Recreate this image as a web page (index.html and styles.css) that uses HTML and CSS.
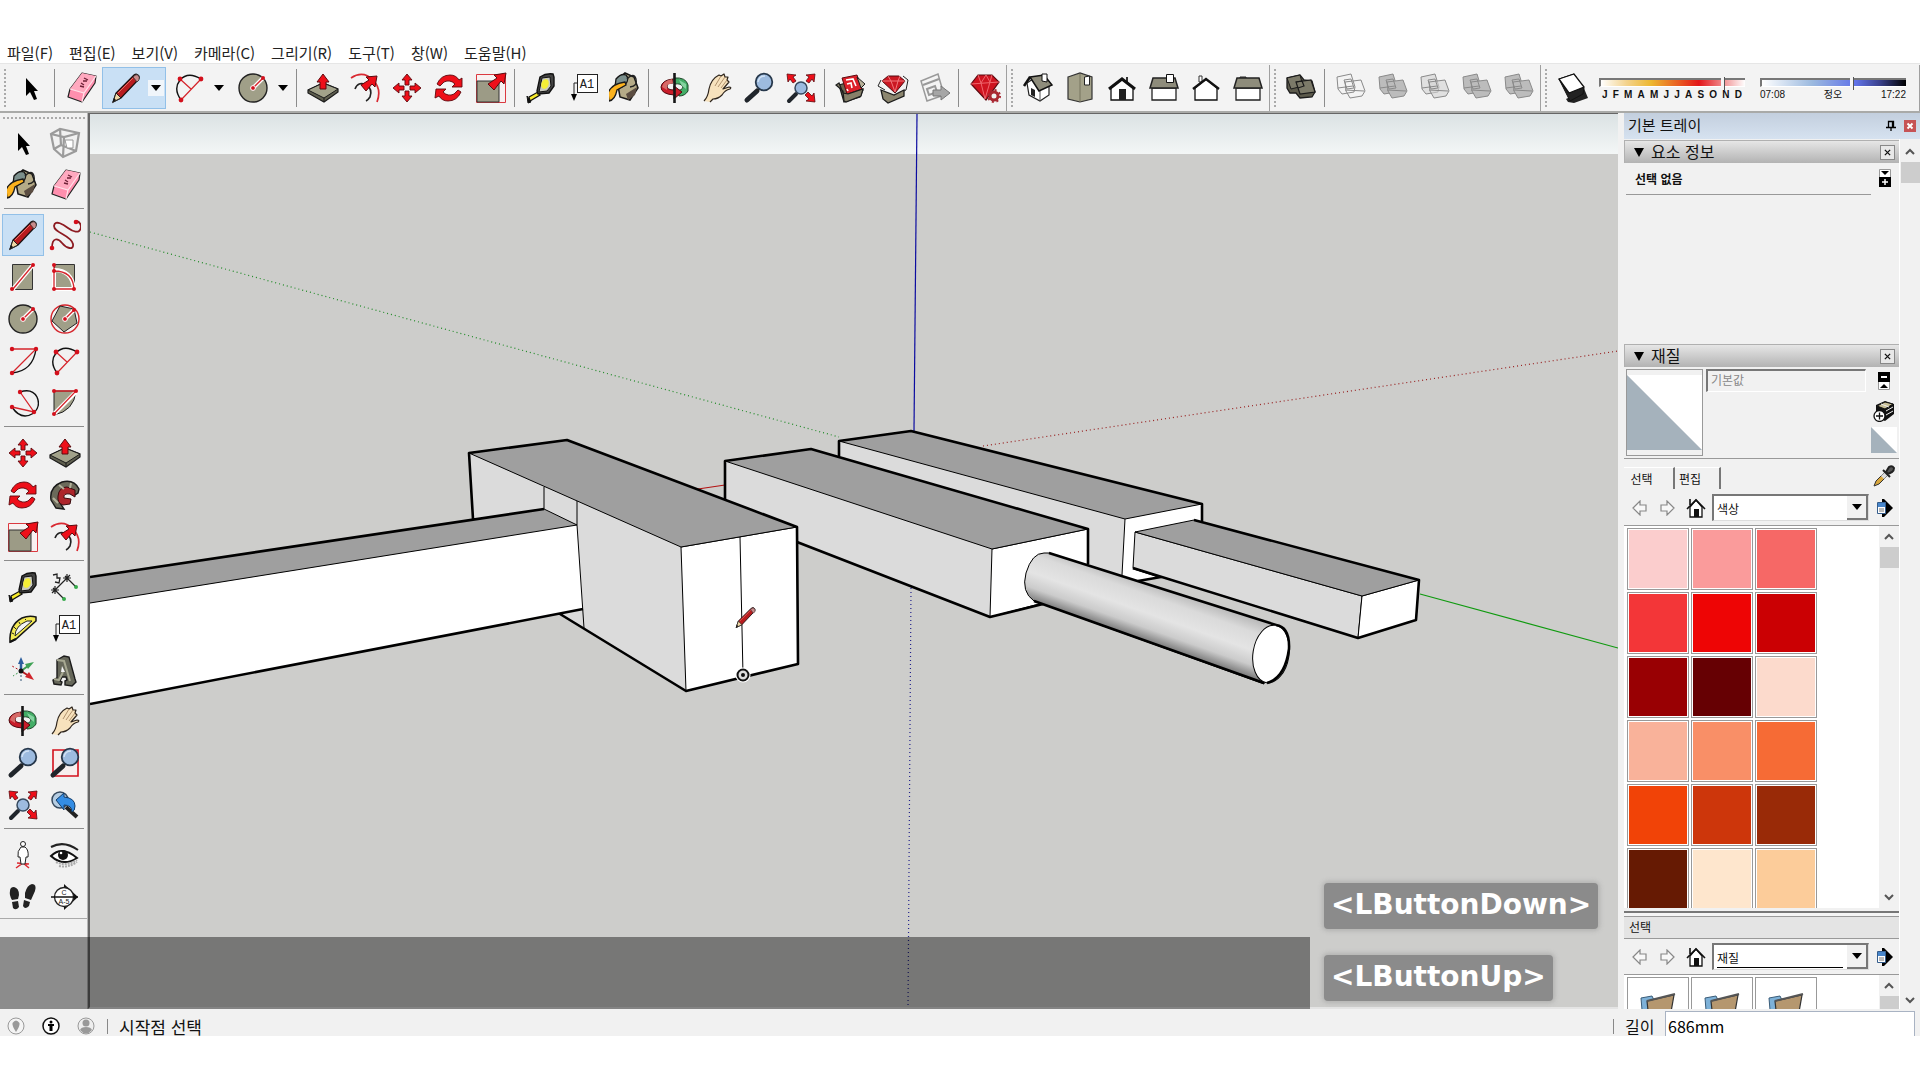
FILE: index.html
```html
<!DOCTYPE html>
<html lang="ko">
<head>
  <meta charset="UTF-8" />
  <meta name="viewport" content="width=device-width, initial-scale=1.0"/>
  <title>3D 모델링</title>
  <link rel="stylesheet" href="styles.css">
</head>
<body>
  <!-- Icon sheet -->
  <svg class="sprite" aria-hidden="true">
    <symbol id="arrow" viewBox="0 0 32 32"><path d="M11 6v18l4-4 4 8 3-1-3-8h4z" fill="#000"/></symbol>
    <symbol id="eraser" viewBox="0 0 32 32">
      <path d="M17 1l14 3-1 7-13 19-14-5 2-8z" fill="#ff8fae" stroke="#222" stroke-width="1.2" stroke-linejoin="round"/>
      <path d="M17 1l14 3-12 17-14-4z" fill="#ffa9bf"/>
      <path d="M5 17l14 4 12-17M19 21l-2 9" fill="none" stroke="#ffe0e8" stroke-width="1.2"/>
      <path d="M15 14l4 1M16 11l3 2M18 9l4 0M19 6l4 2" stroke="#6d2036" stroke-width="1.3"/>
    </symbol>
    <symbol id="pencil" viewBox="0 0 32 32">
      <path d="M3 30l3-9 18-18q3-2 5 1 1 2-1 4L11 26z" fill="#b81c1f" stroke="#1a1212" stroke-width="1.2"/>
      <path d="M3 30l3-9 5 5z" fill="#efd7a5" stroke="#222" stroke-width="1"/>
      <path d="M3 30l1-4 2 2z" fill="#111"/>
      <path d="M23 5l4 5 2-2q1-3-1-5-2-1-4 1z" fill="#c98c8c" stroke="#333" stroke-width=".8"/>
      <path d="M8 21L23 6" stroke="#ea6a62" stroke-width="1"/>
    </symbol>
    <symbol id="arc" viewBox="0 0 32 32">
      <path d="M8 28Q0 17 7 8 15-1 28 7" fill="none" stroke="#111" stroke-width="1.4"/>
      <path d="M8 28L28 7M7 7l11 10" stroke="#d5242b" stroke-width="1.2"/>
      <g fill="#d3101c"><circle cx="8" cy="28" r="2.4"/><circle cx="28" cy="7" r="2.4"/><circle cx="7" cy="7" r="2.4"/></g>
    </symbol>
    <symbol id="circle" viewBox="0 0 32 32">
      <circle cx="16" cy="16" r="14" fill="#a09f88" stroke="#222" stroke-width="1.4"/>
      <path d="M16 16L26 6" stroke="#fff" stroke-width="4"/><path d="M16 16L26 6" stroke="#d5242b" stroke-width="1.4"/>
      <circle cx="16" cy="16" r="2.4" fill="#d3101c" stroke="#fff"/><circle cx="26" cy="6" r="2" fill="#d3101c"/>
    </symbol>
    <symbol id="push" viewBox="0 0 32 32">
      <path d="M1 18l15-7 15 6v3L17 30 1 21z" fill="#5f5f4f" stroke="#1b1b1b" stroke-width="1.2"/>
      <path d="M1 18l15-7 15 6-14 9z" fill="#a2a28a" stroke="#1b1b1b"/><path d="M17 26v4" stroke="#1b1b1b"/>
      <path d="M16 2l6 8h-3v7h-6v-7h-3z" fill="#ee0f19" stroke="#5b0a0e"/>
    </symbol>
    <symbol id="offset" viewBox="0 0 32 32">
      <path d="M2 6Q14-2 24 8q9 9 4 22" fill="none" stroke="#d92a32" stroke-width="1.7"/>
      <path d="M6 17q3-8 11-4 7 4 4 12-2 3-4 4" fill="none" stroke="#222" stroke-width="1.6"/>
      <path d="M28 4l-2 11-3-3-6 7-5-6 8-5-3-3z" fill="#ee0f19" stroke="#5b0a0e"/>
    </symbol>
    <symbol id="move" viewBox="0 0 32 32">
      <g fill="#ee0f19" stroke="#5b0a0e" stroke-width=".9">
        <path d="M16 2l5 6h-3v5h-4V8h-3z"/><path d="M16 30l5-6h-3v-5h-4v5h-3z"/>
        <path d="M2 16l6-5v3h5v4H8v3z"/><path d="M30 16l-6-5v3h-5v4h5v3z"/>
      </g>
    </symbol>
    <symbol id="rotate" viewBox="0 0 32 32">
      <g fill="#ee0f19" stroke="#5b0a0e" stroke-width=".9">
        <path d="M4 12Q8 3 17 3q6 0 9 5l3-2v9H19l3-3q-5-5-11-2l-4 4z"/>
        <path d="M28 20q-4 9-13 9-6 0-9-5l-4 2 1-9h10l-3 3q5 5 11 2l4-4z"/>
      </g>
    </symbol>
    <symbol id="scale" viewBox="0 0 32 32">
      <path d="M1.500 2.500h29v28h-29z" fill="#f8f1f1" stroke="#db3940"/><path d="M2 9h22v21H2z" fill="#9c9b86" stroke="#333"/>
      <path d="M31 1l-2 11-3-3-7 9-6-6 9-6-3-3z" fill="#ee0f19" stroke="#5b0a0e"/>
    </symbol>
    <symbol id="tape" viewBox="0 0 32 32">
      <path d="M4 25l9-5 2 3-10 6z" fill="#f7ea2a" stroke="#111" stroke-width="1.3"/><path d="M2 24l4 6-3 1z" fill="#111" stroke="#111"/>
      <path d="M15 5q6-4 13-3l1 3v9l-5 7-11 1-1-3z" fill="#444" stroke="#111" stroke-width="1.4"/>
      <path d="M17 6l8-1 1 9-4 5-8 1z" fill="#c9c9bf" stroke="#111"/><ellipse cx="20" cy="12" rx="3.600" ry="5" transform="rotate(20 20 12)" fill="#f5ee36"/>
    </symbol>
    <symbol id="label" viewBox="0 0 32 32">
      <rect x="10.500" y="2.500" width="20" height="18" fill="#fff" stroke="#222"/>
      <text x="20" y="16" text-anchor="middle" class="glyph">A1</text>
      <path d="M10 11H7v11" fill="none" stroke="#222"/><path d="M4 22h6l-3 7z" fill="#000"/>
    </symbol>
    <symbol id="paint" viewBox="0 0 32 32">
      <path d="M8 8l8-7 9 4 4 11-8 12-10-3z" fill="#b5ab88" stroke="#161616" stroke-width="1.5"/>
      <path d="M7 7q5-6 10-4 4 4-1 10-6 5-10 2z" fill="#7b8f8c" stroke="#161616" stroke-width="1.3"/>
      <path d="M17 22l11-7-2 8-7 5z" fill="#5b4d42"/><path d="M18 7q7-7 9 0t-6 8" fill="none" stroke="#222" stroke-width="1.3"/>
      <path d="M16 10Q2 12-1 21l1 8q6-1 8-11l9-5z" fill="#fbb21e" stroke="#1a1a1a" stroke-width="1.3"/>
    </symbol>
    <symbol id="orbit" viewBox="0 0 32 32">
      <path d="M15 6q12-1 14 7v6q-3 5-9 5l-2-5q6-1 6-4-2-4-8-3z" fill="#43ad66" stroke="#1b4527"/>
      <path d="M14 7Q3 8 2 15q0 7 13 8v4l8-7-8-6v4q-7 0-7-4 0-3 6-3z" fill="#c91c29" stroke="#4c0b10"/>
      <path d="M3 15q1-6 10-8l1 4-6 2v5z" fill="#d66a67"/><path d="M20 8l7 4v5l-4-3z" fill="#85d3a0"/>
      <path d="M15.500 1v30" stroke="#161616" stroke-width="2.600"/>
    </symbol>
    <symbol id="hand" viewBox="0 0 32 32">
      <path d="M3 29q4-4 5-12Q10 7 18 3l2 1 3-2 1 3 3 0-1 3 2 2-6 7 6-2q3 0 1 2-5 1-8 6-4 4-9 4l-3 3" fill="#f7e2bd" stroke="#2d241c" stroke-width="1.2" stroke-linejoin="round"/>
      <path d="M20 4l-6 10M24 5l-7 10M26 8l-6 8" stroke="#a98965" stroke-width=".9"/>
    </symbol>
    <symbol id="zoom" viewBox="0 0 32 32">
      <path d="M4 28l10-9" stroke="#20252b" stroke-width="5" stroke-linecap="round"/><path d="M14 19l4-4" stroke="#222" stroke-width="2"/>
      <circle cx="21" cy="10" r="8.300" fill="#9dbbdf" stroke="#27384b" stroke-width="1.8"/><path d="M15 10q1-6 7-6" fill="none" stroke="#d2e2f4" stroke-width="1.5"/>
    </symbol>
    <symbol id="extents" viewBox="0 0 32 32">
      <path d="M4 29l7-7" stroke="#20252b" stroke-width="4" stroke-linecap="round"/><circle cx="16" cy="16" r="6" fill="#9dbbdf" stroke="#36495e" stroke-width="1.5"/>
      <g fill="#ee0f19" stroke="#5b0a0e" stroke-width=".8">
        <path d="M2 2l9 1-3 2 3 4-3 2-3-4-2 3z"/><path d="M30 2l-9 1 3 2-3 4 3 2 3-4 2 3z"/><path d="M30 30l-9-1 3-2-4-4 3-3 4 4 2-3z"/>
      </g>
    </symbol>
    <symbol id="warehouse" viewBox="0 0 32 32">
      <path d="M4 13l14-4 10 9-3 7-16 5z" fill="#6c6651" stroke="#1c1c1c" stroke-width="1.3"/>
      <path d="M7 6l15-3 5 14-15 5z" fill="#dc2029" stroke="#5d0b10"/><path d="M11 8l7-1 3 7M12 12l4-1 1 5M12 17l1 2" fill="none" stroke="#fff" stroke-width="1.600"/>
      <path d="M4 11l-3 2 7 6 1 10 2 1 15-6 2-7-15 5-5-1z" fill="#868069" stroke="#1c1c1c" stroke-width="1.200"/><path d="M22 5l8 7-4 4z" fill="#b9b29a" stroke="#1c1c1c"/>
    </symbol>
    <symbol id="extwarehouse" viewBox="0 0 32 32">
      <path d="M4 8l-3 6 7 4M26 4l5 4-2 10-4 2" fill="#f2f2f2" stroke="#222"/>
      <path d="M4 18l13 5 10-5v6l-16 7-5-4z" fill="#8c866f" stroke="#1c1c1c" stroke-width="1.300"/>
      <path d="M5 9l6-5h11l6 5-10 12z" fill="#cb1822" stroke="#52090e"/><path d="M5 9h23M11 4l3 5 4 11 3-11 2-5" fill="none" stroke="#f1767b"/>
    </symbol>
    <symbol id="layout" viewBox="0 0 32 32">
      <path d="M2 9l17-7 6 21-17 6z" fill="#f4f4f4" stroke="#999" stroke-width="1.500"/><path d="M4 13l16-6M8 17l8-3 2 6-8 3z" fill="none" stroke="#999" stroke-width="2"/>
      <path d="M14 18h8v-4l9 7-9 7v-4h-8z" fill="#a6a6a6" stroke="#777"/>
    </symbol>
    <symbol id="ruby" viewBox="0 0 32 32">
      <path d="M2 12l7-9h14l7 7-13 18z" fill="#cf1420" stroke="#5a0a10" stroke-width="1.200"/><path d="M2 12l28-2M9 3l3 8 4 16 5-17 2-7M12 11l5-8 4 7" fill="none" stroke="#f0666d"/>
      <circle cx="25" cy="24" r="4" fill="#f0f0f0" stroke="#a92731" stroke-width="3"/><circle cx="25" cy="24" r="6" fill="none" stroke="#a92731" stroke-width="2" stroke-dasharray="2 2.700"/>
    </symbol>
    <symbol id="iso" viewBox="0 0 32 32">
      <path d="M5 11l2 12 11 6 9-6V13L14 5z" fill="#fff" stroke="#222" stroke-width="1.200"/><path d="M18 29V17" stroke="#555"/>
      <path d="M8 5l14-2 8 10-13 6z" fill="#8e8c7b" stroke="#111" stroke-width="1.500"/><path d="M8 5L2 14" stroke="#111" stroke-width="2.500"/>
      <path d="M20 9V2h5v8z" fill="#fff" stroke="#111"/><path d="M9 16l4 2v7l-4-2z" fill="#222"/>
    </symbol>
    <symbol id="top" viewBox="0 0 32 32">
      <path d="M4 5l12-4 12 4v22l-12 3-12-3z" fill="#a3a189" stroke="#333" stroke-width="1.200"/><path d="M16 2v28" stroke="#77745f"/><path d="M20.500 5l5-1v9h-5z" fill="#fff" stroke="#222"/>
    </symbol>
    <symbol id="front" viewBox="0 0 32 32">
      <path d="M5 16v12h22V16L16 7z" fill="#fff" stroke="#111" stroke-width="1.300"/><path d="M20 5h2v5h-2z" fill="#333"/><path d="M3 17L16 7l13 10" fill="none" stroke="#111" stroke-width="3"/>
      <path d="M13 28V17h7v11z" fill="#222"/>
    </symbol>
    <symbol id="right" viewBox="0 0 32 32">
      <path d="M4 16h24v12H4z" fill="#fff" stroke="#222" stroke-width="1.300"/><path d="M5 6h22l3 10H2z" fill="#8e8c7b" stroke="#222" stroke-width="1.500"/><path d="M18.500 2.500h7v8h-7z" fill="#fff" stroke="#111"/>
    </symbol>
    <symbol id="back" viewBox="0 0 32 32">
      <path d="M9 4h3v6H9z" fill="#fff" stroke="#333"/><path d="M5 16v12h22V16L16 7z" fill="#fff" stroke="#111" stroke-width="1.300"/><path d="M3 17L16 7l13 10" fill="none" stroke="#111" stroke-width="2.400"/>
    </symbol>
    <symbol id="left" viewBox="0 0 32 32">
      <path d="M4 16h24v12H4z" fill="#fff" stroke="#222" stroke-width="1.300"/><path d="M8 5h6v3H8z" fill="#777" stroke="#222"/><path d="M5 6h22l3 10H2z" fill="#8e8c7b" stroke="#222" stroke-width="1.500"/>
    </symbol>
    <symbol id="shell" viewBox="0 0 32 32">
      <path d="M2 6l13-3 4 5 8 1 3 11-3 5-12 1-4-5-6 0-3-5z" fill="#5c5a4c" stroke="#1b1b1b" stroke-width="1.300"/>
      <path d="M2 6l13-3 3 11-12 3z" fill="#7c7a69" stroke="#1b1b1b"/><path d="M11 10l15-2 4 12-15 2z" fill="#7c7a69" stroke="#1b1b1b" stroke-width="1.200"/><path d="M11 10l6-1 2 5-6 2" fill="none" stroke="#1b1b1b" stroke-width="1.200"/>
    </symbol>
    <symbol id="solid" viewBox="0 0 32 32">
      <g stroke="#8a8a8a"><path d="M2 5l14-3 4 13-1 5-12 2-4-5z"/><path d="M10 10l16-2 4 11-3 5-12 2-4-7z"/><path d="M10 18l19 1M3 16l15-2M9 8l7-1 3 9-7 1z" fill="none"/></g>
    </symbol>
    <symbol id="shadow" viewBox="0 0 32 32">
      <path d="M10 27l8-4 9-9 5 12-14 5-6-1z" fill="#222"/><path d="M3 7l15-5 10 14-1 6-13 7z" fill="#222" stroke="#111"/><path d="M3 7l15-5 10 13-15 6z" fill="#fff" stroke="#111" stroke-width="1.300"/>
    </symbol>
    <symbol id="component" viewBox="0 0 32 32">
      <g fill="none" stroke="#9b9b9b" stroke-width="2.200"><path d="M2 7l9-5 19 4-3 18-13 6L5 22z"/><path d="M2 7l13 3 15-4M15 10l-1 20M11 2l1 16 15 6M12 18l-7 4"/></g>
      <path d="M16 13h8v8h-6z" fill="#fff" stroke="#999"/>
    </symbol>
    <symbol id="freehand" viewBox="0 0 32 32">
      <path d="M3 29C3 18 9 19 13 24s12 8 11 1C22 16 5 14 5 7 6 0 15 6 19 9s12 7 13-1q0-5-5-6" fill="none" stroke="#8d1a20" stroke-width="1.800"/>
      <g fill="#d3101c"><circle cx="3" cy="29" r="2.300"/><circle cx="27" cy="3" r="2.300"/></g>
    </symbol>
    <symbol id="rect" viewBox="0 0 32 32">
      <path d="M5.500 3.500h20v25h-20z" fill="#a09f88" stroke="#333"/><path d="M6 28L26 4" stroke="#fff" stroke-width="4"/><path d="M6 28L26 4" stroke="#d5242b" stroke-width="1.300"/>
      <g fill="#d3101c"><circle cx="5" cy="28" r="2"/><circle cx="26" cy="4" r="2"/></g>
    </symbol>
    <symbol id="rotrect" viewBox="0 0 32 32">
      <path d="M5.500 3.500h20v25h-20z" fill="#a09f88" stroke="#333"/><path d="M5 28V9q18 0 20 19z" fill="none" stroke="#fff" stroke-width="4"/><path d="M5 4v24h20Q24 10 5 10" fill="none" stroke="#d5242b" stroke-width="1.300"/>
      <g fill="#d3101c"><circle cx="5" cy="28" r="2"/><circle cx="25" cy="28" r="2"/><circle cx="5" cy="10" r="2"/><circle cx="5" cy="4" r="2"/></g>
    </symbol>
    <symbol id="polygon" viewBox="0 0 32 32">
      <circle cx="16" cy="16" r="14" fill="#f3f3f3" stroke="#d5242b" stroke-width="1.400"/><path d="M11 3l14 3 3 14-13 9L3 18z" fill="#a09f88" stroke="#222"/>
      <path d="M16 16L25 7" stroke="#fff" stroke-width="4"/><path d="M16 16L25 7" stroke="#d5242b" stroke-width="1.400"/><circle cx="16" cy="16" r="2.400" fill="#d3101c" stroke="#fff"/><circle cx="25" cy="7" r="2" fill="#d3101c"/>
    </symbol>
    <symbol id="twoarc" viewBox="0 0 32 32">
      <path d="M5 28Q26 26 29 4" fill="none" stroke="#111" stroke-width="1.400"/><path d="M5 4h24L5 28" fill="none" stroke="#d5242b" stroke-width="1.300"/>
      <g fill="#d3101c"><circle cx="5" cy="4" r="2.200"/><circle cx="29" cy="4" r="2.200"/><circle cx="5" cy="28" r="2.200"/></g>
    </symbol>
    <symbol id="threearc" viewBox="0 0 32 32">
      <path d="M13 5q12-4 17 5 4 9-3 16Q14 34 5 20" fill="none" stroke="#111" stroke-width="1.400"/><path d="M5 20l22 5L13 5" fill="none" stroke="#d5242b" stroke-width="1.300"/>
      <g fill="#d3101c"><circle cx="5" cy="20" r="2.200"/><circle cx="27" cy="25" r="2.200"/><circle cx="13" cy="5" r="2.200"/></g>
    </symbol>
    <symbol id="pie" viewBox="0 0 32 32">
      <path d="M5 4h22q-2 20-22 24z" fill="#a09f88" stroke="#222"/><path d="M5 27L27 5" stroke="#fff" stroke-width="4"/><path d="M5 4h22L5 27" fill="none" stroke="#d5242b" stroke-width="1.300"/>
      <g fill="#d3101c"><circle cx="5" cy="4" r="2"/><circle cx="27" cy="4" r="2"/><circle cx="5" cy="27" r="2"/></g>
    </symbol>
    <symbol id="follow" viewBox="0 0 32 32">
      <path d="M30 10Q25 0 13 3 0 8 2 21l5 8 8 1-4-6q-3-9 6-12l9 4 3-2z" fill="#6b6a5a" stroke="#1a1a1a" stroke-width="1.400"/>
      <path d="M9 17q1-9 9-9l8 3v7l-5-3q-7-1-6 4l7 1-1 5-7 1q-6-2-5-9z" fill="#ad252b" stroke="#3b0a0d"/><path d="M4 19l5 5M10 6l5 4M22 4l-1 5" stroke="#b3b29b" stroke-width="2"/>
    </symbol>
    <symbol id="dimension" viewBox="0 0 32 32">
      <path d="M6 19L18 7M4 17l11 11M16 5l11 11M2 19h8M14 7h8M6 15v8M18 3v8M3 22l6-6M15 10l6-6" stroke="#222" stroke-width="1.200"/>
      <circle cx="15" cy="28" r="2" fill="#37aa4c"/><circle cx="27" cy="16" r="2" fill="#37aa4c"/><path d="M4 4l4-1v4l3 0-1 5-4-1" fill="none" stroke="#222" stroke-width="1.300"/>
    </symbol>
    <symbol id="protractor" viewBox="0 0 32 32">
      <path d="M3 29Q2 12 15 5q7-3 14-1v4L9 26z" fill="#f4ea54" stroke="#161616" stroke-width="1.500"/><path d="M8 23q0-10 12-15h5z" fill="#f3f3f3" stroke="#222"/><path d="M3 29l6-3" stroke="#111" stroke-width="2"/>
      <path d="M5 20l2 1M7 14l2 2M12 9l1 2M18 6l1 1" stroke="#222"/>
    </symbol>
    <symbol id="axes" viewBox="0 0 32 32">
      <path d="M14 16V8" stroke="#2d5f9e" stroke-width="2.500"/><path d="M11 9l3-7 3 7z" fill="#2d5f9e"/>
      <path d="M14 16l7-5" stroke="#3e9b52" stroke-width="2"/><path d="M18 9l9-2-6 7z" fill="#3fa255"/><path d="M14 16l8 5" stroke="#b31b22" stroke-width="2"/><path d="M22 17l5 8-9-3z" fill="#d1242b"/>
      <path d="M14 16v12" stroke="#357" stroke-dasharray="2 2"/><path d="M14 16l-8 5" stroke="#3e9b52" stroke-dasharray="2 2"/><path d="M14 16l-9-5" stroke="#b31b22" stroke-dasharray="2 2"/><circle cx="14" cy="16" r="2.500" fill="#111"/>
    </symbol>
    <symbol id="text3d" viewBox="0 0 32 32">
      <path d="M8 5l7-4 5 1 6 22 1 3-4 4-7-1v-4l2-1-1-3h-4l-2 4 2 1-1 3-7-1-1-4 4-2z" fill="#66675a" stroke="#1b1b1b" stroke-width="1.400"/><path d="M8 5l7 1 6 20M5 24l5 1 4-8" fill="none" stroke="#a7a892" stroke-width="2"/><path d="M13 11l3 6h-4z" fill="#f1f1f1"/>
    </symbol>
    <symbol id="zoomwin" viewBox="0 0 32 32"><path d="M4 3h25v26H4z" fill="#f7eeee" stroke="#d3101c" stroke-width="1.600"/><use href="#zoom" width="32" height="32"/></symbol>
    <symbol id="previous" viewBox="0 0 32 32">
      <circle cx="11" cy="11" r="8" fill="#b6cde2" stroke="#36495e" stroke-width="1.500"/><path d="M17 18l11 10" stroke="#222" stroke-width="4"/>
      <path d="M7 11l8-7v4q11 1 11 9 0 5-3 6 0-7-8-7v5z" fill="#348de4" stroke="#123d6b"/>
    </symbol>
    <symbol id="person" viewBox="0 0 32 32">
      <path d="M9 29l7-5 6 5M10 24l12 1" stroke="#dc2a31" stroke-width="1.500" fill="none"/><circle cx="16" cy="5" r="2.500" fill="#fff" stroke="#222"/>
      <path d="M14 8q-4 4-3 10h2l1 7h4l1-7h2q1-7-3-10z" fill="#fff" stroke="#222"/>
    </symbol>
    <symbol id="eye" viewBox="0 0 32 32">
      <path d="M2 8q13-7 27 3" fill="none" stroke="#222" stroke-width="2"/><path d="M2 17q11-11 26 2-14 9-26-2z" fill="#fff" stroke="#111" stroke-width="2"/><circle cx="14" cy="16" r="5" fill="#111"/><circle cx="12" cy="14" r="1.300" fill="#fff"/>
      <path d="M7 23q10 5 21-2M10 27q9 2 18-4" fill="none" stroke="#aaa" stroke-width="2" stroke-dasharray="2 1"/>
    </symbol>
    <symbol id="feet" viewBox="0 0 32 32">
      <path d="M3 10q0-4 4-4 5 1 5 8l-1 4-6 1q-3-5-2-9zM5 21l6-1 1 6q-3 4-6 1z" fill="#222"/>
      <path d="M18 12q2-8 7-9 5 0 3 7l-4 9-6-2zM17 19l6 2-1 4q-4 4-6 0z" fill="#222"/>
    </symbol>
    <symbol id="section" viewBox="0 0 32 32">
      <path d="M15 3l14 13-14 13z" fill="#111"/><circle cx="15" cy="16" r="9.500" fill="#fff" stroke="#222" stroke-width="1.300"/><path d="M2 16h27" stroke="#111" stroke-width="1.500"/>
      <text x="15" y="14" text-anchor="middle" class="glyph tiny">C</text><text x="15" y="23" text-anchor="middle" class="glyph tiny">A-5</text>
    </symbol>
    <symbol id="navleft" viewBox="0 0 16 16"><path d="M1 8l7-7v4h6v6H8v4z" fill="#f8f8f8" stroke="#888" stroke-width="1.200"/></symbol>
    <symbol id="navright" viewBox="0 0 16 16"><path d="M15 8L8 1v4H2v6h6v4z" fill="#f8f8f8" stroke="#888" stroke-width="1.200"/></symbol>
    <symbol id="home" viewBox="0 0 20 20"><path d="M4 9v10h12V9l-6-7z" fill="#fff" stroke="#111" stroke-width="1.300"/><path d="M1 11l9-9 9 9M4 7V1" fill="none" stroke="#111" stroke-width="1.600"/><path d="M8 19v-8h5v8z" fill="#111"/></symbol>
    <symbol id="details" viewBox="0 0 18 18"><path d="M6 0h2l9 9-9 9H6z" fill="#000"/><path d="M1.500 3.500h8v11h-8z" fill="#fff" stroke="#345d8c"/><path d="M2 4h7v4H2z" fill="#4886cb"/><path d="M3 10h5M3 12h5" stroke="#777"/></symbol>
    <symbol id="up" viewBox="0 0 10 10"><path d="M1 7l4-4 4 4" fill="none" stroke="#555" stroke-width="2"/></symbol>
    <symbol id="down" viewBox="0 0 10 10"><path d="M1 3l4 4 4-4" fill="none" stroke="#555" stroke-width="2"/></symbol>
    <symbol id="tri" viewBox="0 0 10 6" preserveAspectRatio="none"><path d="M0 0h10L5 6z" fill="#000"/></symbol>
    <symbol id="folder" viewBox="0 0 40 40"><path d="M3 6l11-2 2 4-6 28-5-6z" fill="#7db1d8" stroke="#3a5c78"/><path d="M9 9l27-6-6 34H12z" fill="#b5976f" stroke="#333" stroke-width="1.200"/><path d="M9 9l28-7" stroke="#555" stroke-width="2"/></symbol>
  </svg>

  <!-- Menu -->
  <nav class="menubar">
    <a href="#">파일(F)</a><a href="#">편집(E)</a><a href="#">보기(V)</a><a href="#">카메라(C)</a>
    <a href="#">그리기(R)</a><a href="#">도구(T)</a><a href="#">창(W)</a><a href="#">도움말(H)</a>
  </nav>

  <!-- Main toolbar -->
  <div class="toolbar">
    <div class="group">
      <span class="grip"></span>
      <button class="tool" aria-label="선택"><svg class="icon"><use href="#arrow"/></svg></button>
      <span class="sep"></span>
      <button class="tool" aria-label="지우개"><svg class="icon"><use href="#eraser"/></svg></button>
      <div class="split active">
        <button class="tool" aria-label="선"><svg class="icon"><use href="#pencil"/></svg></button>
        <button class="drop" aria-label="선 도구 더 보기"><svg class="tri"><use href="#tri"/></svg></button>
      </div>
      <div class="split">
        <button class="tool" aria-label="호"><svg class="icon"><use href="#arc"/></svg></button>
        <button class="drop" aria-label="호 도구 더 보기"><svg class="tri"><use href="#tri"/></svg></button>
      </div>
      <div class="split">
        <button class="tool" aria-label="원"><svg class="icon"><use href="#circle"/></svg></button>
        <button class="drop" aria-label="도형 더 보기"><svg class="tri"><use href="#tri"/></svg></button>
      </div>
      <span class="sep"></span>
      <button class="tool" aria-label="밀기/끌기"><svg class="icon"><use href="#push"/></svg></button>
      <button class="tool" aria-label="오프셋"><svg class="icon"><use href="#offset"/></svg></button>
      <button class="tool" aria-label="이동"><svg class="icon"><use href="#move"/></svg></button>
      <button class="tool" aria-label="회전"><svg class="icon"><use href="#rotate"/></svg></button>
      <button class="tool" aria-label="배율"><svg class="icon"><use href="#scale"/></svg></button>
      <span class="sep"></span>
      <button class="tool" aria-label="줄자"><svg class="icon"><use href="#tape"/></svg></button>
      <button class="tool" aria-label="텍스트"><svg class="icon"><use href="#label"/></svg></button>
      <button class="tool" aria-label="페인트 통"><svg class="icon"><use href="#paint"/></svg></button>
      <span class="sep"></span>
      <button class="tool" aria-label="궤도"><svg class="icon"><use href="#orbit"/></svg></button>
      <button class="tool" aria-label="이동 보기"><svg class="icon"><use href="#hand"/></svg></button>
      <button class="tool" aria-label="확대/축소"><svg class="icon"><use href="#zoom"/></svg></button>
      <button class="tool" aria-label="범위 확대"><svg class="icon"><use href="#extents"/></svg></button>
      <span class="sep"></span>
      <button class="tool" aria-label="3D 웨어하우스"><svg class="icon"><use href="#warehouse"/></svg></button>
      <button class="tool" aria-label="확장 웨어하우스"><svg class="icon"><use href="#extwarehouse"/></svg></button>
      <button class="tool" aria-label="레이아웃으로 보내기"><svg class="icon"><use href="#layout"/></svg></button>
      <span class="sep"></span>
      <button class="tool" aria-label="확장 관리자"><svg class="icon"><use href="#ruby"/></svg></button>
    </div>
    <div class="group">
      <span class="grip"></span>
      <button class="tool" aria-label="등각"><svg class="icon"><use href="#iso"/></svg></button>
      <button class="tool" aria-label="상단"><svg class="icon"><use href="#top"/></svg></button>
      <button class="tool" aria-label="전면"><svg class="icon"><use href="#front"/></svg></button>
      <button class="tool" aria-label="우측"><svg class="icon"><use href="#right"/></svg></button>
      <button class="tool" aria-label="후면"><svg class="icon"><use href="#back"/></svg></button>
      <button class="tool" aria-label="좌측"><svg class="icon"><use href="#left"/></svg></button>
    </div>
    <div class="group">
      <span class="grip"></span>
      <button class="tool" aria-label="외부 셸"><svg class="icon"><use href="#shell"/></svg></button>
      <span class="sep"></span>
      <button class="tool" aria-label="교차"><svg class="icon wire"><use href="#solid"/></svg></button>
      <button class="tool" aria-label="결합"><svg class="icon filled"><use href="#solid"/></svg></button>
      <button class="tool" aria-label="빼기"><svg class="icon half"><use href="#solid"/></svg></button>
      <button class="tool" aria-label="트림"><svg class="icon filled"><use href="#solid"/></svg></button>
      <button class="tool" aria-label="분할"><svg class="icon filled"><use href="#solid"/></svg></button>
    </div>
    <div class="group last">
      <span class="grip"></span>
      <button class="tool" aria-label="그림자"><svg class="icon"><use href="#shadow"/></svg></button>
      <div class="slider">
        <input type="range" class="date" min="0" max="100" value="86" aria-label="날짜">
        <div class="ticks months"><span>J</span><span>F</span><span>M</span><span>A</span><span>M</span><span>J</span><span>J</span><span>A</span><span>S</span><span>O</span><span>N</span><span>D</span></div>
      </div>
      <div class="slider">
        <input type="range" class="time" min="0" max="100" value="63" aria-label="시간">
        <div class="ticks"><span>07:08</span><span>정오</span><span>17:22</span></div>
      </div>
    </div>
  </div>

  <div class="workspace">
    <!-- Large tool set -->
    <aside class="sidebar">
      <div class="toolset">
        <span class="grip-h"></span>
        <button class="tool" aria-label="선택"><svg class="icon"><use href="#arrow"/></svg></button>
        <button class="tool" aria-label="구성요소 만들기"><svg class="icon"><use href="#component"/></svg></button>
        <button class="tool" aria-label="페인트 통"><svg class="icon"><use href="#paint"/></svg></button>
        <button class="tool" aria-label="지우개"><svg class="icon"><use href="#eraser"/></svg></button>
        <hr>
        <button class="tool active" aria-label="선"><svg class="icon"><use href="#pencil"/></svg></button>
        <button class="tool" aria-label="자유형"><svg class="icon"><use href="#freehand"/></svg></button>
        <button class="tool" aria-label="직사각형"><svg class="icon"><use href="#rect"/></svg></button>
        <button class="tool" aria-label="회전된 직사각형"><svg class="icon"><use href="#rotrect"/></svg></button>
        <button class="tool" aria-label="원"><svg class="icon"><use href="#circle"/></svg></button>
        <button class="tool" aria-label="다각형"><svg class="icon"><use href="#polygon"/></svg></button>
        <button class="tool" aria-label="호"><svg class="icon"><use href="#twoarc"/></svg></button>
        <button class="tool" aria-label="2점 호"><svg class="icon"><use href="#arc"/></svg></button>
        <button class="tool" aria-label="3점 호"><svg class="icon"><use href="#threearc"/></svg></button>
        <button class="tool" aria-label="파이"><svg class="icon"><use href="#pie"/></svg></button>
        <hr>
        <button class="tool" aria-label="이동"><svg class="icon"><use href="#move"/></svg></button>
        <button class="tool" aria-label="밀기/끌기"><svg class="icon"><use href="#push"/></svg></button>
        <button class="tool" aria-label="회전"><svg class="icon"><use href="#rotate"/></svg></button>
        <button class="tool" aria-label="따라가기"><svg class="icon"><use href="#follow"/></svg></button>
        <button class="tool" aria-label="배율"><svg class="icon"><use href="#scale"/></svg></button>
        <button class="tool" aria-label="오프셋"><svg class="icon"><use href="#offset"/></svg></button>
        <hr>
        <button class="tool" aria-label="줄자"><svg class="icon"><use href="#tape"/></svg></button>
        <button class="tool" aria-label="치수"><svg class="icon"><use href="#dimension"/></svg></button>
        <button class="tool" aria-label="각도기"><svg class="icon"><use href="#protractor"/></svg></button>
        <button class="tool" aria-label="텍스트"><svg class="icon"><use href="#label"/></svg></button>
        <button class="tool" aria-label="축"><svg class="icon"><use href="#axes"/></svg></button>
        <button class="tool" aria-label="3D 텍스트"><svg class="icon"><use href="#text3d"/></svg></button>
        <hr>
        <button class="tool" aria-label="궤도"><svg class="icon"><use href="#orbit"/></svg></button>
        <button class="tool" aria-label="이동 보기"><svg class="icon"><use href="#hand"/></svg></button>
        <button class="tool" aria-label="확대/축소"><svg class="icon"><use href="#zoom"/></svg></button>
        <button class="tool" aria-label="창 확대"><svg class="icon"><use href="#zoomwin"/></svg></button>
        <button class="tool" aria-label="범위 확대"><svg class="icon"><use href="#extents"/></svg></button>
        <button class="tool" aria-label="이전"><svg class="icon"><use href="#previous"/></svg></button>
        <hr>
        <button class="tool" aria-label="카메라 배치"><svg class="icon"><use href="#person"/></svg></button>
        <button class="tool" aria-label="둘러보기"><svg class="icon"><use href="#eye"/></svg></button>
        <button class="tool" aria-label="걷기"><svg class="icon"><use href="#feet"/></svg></button>
        <button class="tool" aria-label="단면"><svg class="icon"><use href="#section"/></svg></button>
      </div>
    </aside>

    <!-- Model view -->
    <main class="viewport">
      <svg class="scene" viewBox="90 114 1528 895" preserveAspectRatio="xMidYMin slice">
        <defs>
          <linearGradient id="cyl" gradientUnits="userSpaceOnUse" x1="1165" y1="586" x2="1146" y2="640">
            <stop offset="0" stop-color="#b5b5b5"/><stop offset=".25" stop-color="#dadada"/>
            <stop offset=".55" stop-color="#e4e4e4"/><stop offset=".8" stop-color="#cbcbcb"/><stop offset="1" stop-color="#808080"/>
          </linearGradient>
          <linearGradient id="sky" x1="0" y1="0" x2="0" y2="1">
            <stop offset="0" stop-color="#dbe2e4"/><stop offset="1" stop-color="#f3f6f6"/>
          </linearGradient>
        </defs>
        <rect x="90" y="114" width="1528" height="895" fill="#cdcdcb"/>
        <rect x="90" y="114" width="1528" height="40" fill="url(#sky)"/>
        <g fill="none" stroke-width="1.200">
          <path d="M917 114l-3 317" stroke="#0c0ca0"/><path d="M911 588l-3 421" stroke="#22228c" stroke-dasharray="1 3"/>
          <path d="M90 232l749 205" stroke="#1f8a26" stroke-dasharray="1 3"/><path d="M983 446l635-95" stroke="#981f1f" stroke-dasharray="1 3"/>
          <path d="M698 489l27-4" stroke="#b31212"/><path d="M1420 594l198 54" stroke="#0f9a0f"/>
        </g>
        <!-- back bar with its tenon -->
        <g stroke="#000" stroke-linejoin="round">
          <path d="M839 441l286 78-3 61-283-124z" fill="#dbdbdb" stroke="none"/>
          <path d="M1125 519l77-15v40l-41 33-23 4-16-6z" fill="#fff" stroke="none"/>
          <path d="M839 441l72-10 291 73-77 15z" fill="#9f9f9f" stroke-width="1"/>
          <path d="M1125 519l-3 56" stroke-width="1"/>
          <path d="M839 456v-15l72-10 291 73v17M1138 581l23-4-28-9" fill="none" stroke-width="2.600"/>
          <path d="M1135 532l227 64-4 42-225-70z" fill="#dbdbdb" stroke-width="1"/>
          <path d="M1362 596l57-16-3 40-58 18z" fill="#fff" stroke-width="1"/>
          <path d="M1135 532l59-12 225 60-57 16z" fill="#9f9f9f" stroke-width="1"/>
          <path d="M1194 520l225 60-3 40-58 18-225-70" fill="none" stroke-width="2.600"/>
        </g>
        <!-- middle bar with the dowel -->
        <g stroke="#000" stroke-linejoin="round">
          <path d="M725 461l267 88-2 68-265-104z" fill="#dbdbdb" stroke="none"/>
          <path d="M992 549l96-20v62l-98 26z" fill="#fff" stroke-width="1"/>
          <path d="M725 461l86-12 277 80-96 20z" fill="#9f9f9f" stroke-width="1"/>
          <path d="M725 505v-44l86-12 277 80v35M1043 604l-53 13-193-75" fill="none" stroke-width="2.600"/>
          <path d="M1049 553l227 72-12 59-230-83q-13-9-8-28 6-20 18-20z" fill="url(#cyl)" stroke-width="1"/>
          <path d="M1049 553l227 72M1034 601l230 82" fill="none" stroke-width="2.600"/>
          <ellipse cx="1271" cy="654" rx="18" ry="29" transform="rotate(9 1271 654)" fill="#fff" stroke-width="1"/>
          <path d="M1276 625q14 2 13 24-4 29-22 34" fill="none" stroke-width="2.600"/>
        </g>
        <!-- front block and crossing beam -->
        <g stroke="#000" stroke-linejoin="round">
          <path d="M469 453l212 94 5 144-126-77-87-95z" fill="#dbdbdb" stroke="none"/>
          <path d="M681 547l116-20 1 137-112 27z" fill="#fff" stroke-width="1"/>
          <path d="M469 453l98-13 230 87-116 20z" fill="#9f9f9f" stroke-width="1"/>
          <path d="M90 603l487-78 6 84-493 95z" fill="#fff" stroke="none"/>
          <path d="M90 577l454-68 33 16-487 78z" fill="#9f9f9f" stroke="none"/>
          <path d="M544 487v22l33 16-487 78M577 501v24l7 103M740 537l3 138" fill="none" stroke-width="1"/>
          <path d="M473 519l-4-66 98-13 230 87 1 137-112 27-126-77M90 577l454-68M90 704l493-95" fill="none" stroke-width="2.600"/>
        </g>
        <circle cx="743" cy="675" r="7.500" fill="#fff"/><circle cx="743" cy="675" r="5.500" fill="#ddd" stroke="#111" stroke-width="2"/><circle cx="743" cy="675" r="2" fill="#111"/>
        <use href="#pencil" x="734" y="606" width="23" height="23"/>
      </svg>
      <div class="keys"><kbd>&lt;LButtonDown&gt;</kbd><kbd>&lt;LButtonUp&gt;</kbd></div>
    </main>

    <!-- Tray -->
    <aside class="tray">
      <header class="tray-title"><h2>기본 트레이</h2>
        <button class="pin" aria-label="고정"><svg viewBox="0 0 10 12"><path d="M2.500 7V1.500h5V7M0 7.500h10M5 7v4M6.500 2v5" fill="none" stroke="#000" stroke-width="1.300"/></svg></button>
        <button class="close-red" aria-label="닫기"><svg viewBox="0 0 8 8"><path d="M2 2l4 4M6 2L2 6" stroke="#fff" stroke-width="1.500"/></svg></button>
      </header>
      <div class="tray-body">
        <div class="panels">
          <section class="entity">
            <header class="bar"><svg class="tri"><use href="#tri"/></svg><h3>요소 정보</h3><button class="close" aria-label="요소 정보 닫기"><svg viewBox="0 0 8 8"><path d="M1 1l6 6M7 1L1 7" stroke="#111" stroke-width="1.500"/></svg></button></header>
            <div class="entity-row"><strong>선택 없음</strong><button class="toggle" aria-label="자세히"><svg viewBox="0 0 12 18"><path d="M.500.500h11v17H.500z" fill="#fff" stroke="#999"/><path d="M2 2h8L6 6z"/><path d="M0 8h12v10H0z"/><path d="M6 10v6M3 13h6" stroke="#fff" stroke-width="1.500"/></svg></button></div>
          </section>

          <section class="materials">
            <header class="bar"><svg class="tri"><use href="#tri"/></svg><h3>재질</h3><button class="close" aria-label="재질 닫기"><svg viewBox="0 0 8 8"><path d="M1 1l6 6M7 1L1 7" stroke="#111" stroke-width="1.500"/></svg></button></header>
            <div class="current">
              <div class="preview"><svg viewBox="0 0 75 75"><path d="M0 0h75v75z" fill="#fff"/><path d="M0 0l75 75H0z" fill="#a5b2bc"/></svg></div>
              <input type="text" class="name" value="기본값" aria-label="재질 이름" disabled>
              <div class="current-tools">
                <button class="toggle" aria-label="보조 창"><svg viewBox="0 0 12 18"><path d="M.500.500h11v17H.500z" fill="#fff" stroke="#999"/><path d="M0 0h12v10H0z"/><path d="M3 4h6v2H3z" fill="#fff"/><path d="M2 16h8l-4-4z"/></svg></button>
                <button class="create" aria-label="재질 만들기"><svg viewBox="0 0 22 22"><path d="M3 5l9-4 9 3v10l-9 7-9-4z" fill="#111"/><path d="M4 6l8-4 8 2-8 5z" fill="#c8bf96" stroke="#111"/><path d="M8 4l8 3M13 11l7-4M13 15l7-4" stroke="#eee"/><circle cx="6.500" cy="16" r="5.500" fill="#fff" stroke="#111" stroke-width="1.300"/><path d="M3 16h7M6.500 12.500v7" stroke="#111" stroke-width="1.300"/></svg></button>
                <button class="default" aria-label="기본 재질"><svg viewBox="0 0 26 26"><path d="M0 0h26v26z" fill="#fff"/><path d="M0 0l26 26H0z" fill="#a5b2bc"/></svg></button>
              </div>
            </div>
            <div class="tabs"><button class="on">선택</button><button>편집</button>
              <button class="dropper" aria-label="샘플 페인트"><svg viewBox="0 0 22 22"><path d="M1 21l2-5 9-9 3 3-9 9z" fill="#d8a63c" stroke="#333"/><path d="M8 11l4-4 3 3-4 4z" fill="#ddd"/><path d="M10 5l7 7M13 7l3-5q3-2 5 1 0 3-2 4l-4 2z" fill="#555" stroke="#222" stroke-width="2"/></svg></button>
            </div>
            <div class="navrow">
              <button aria-label="뒤로"><svg class="n16"><use href="#navleft"/></svg></button><button aria-label="앞으로"><svg class="n16"><use href="#navright"/></svg></button><button aria-label="모델에서"><svg class="n20"><use href="#home"/></svg></button>
              <div class="combo"><select aria-label="컬렉션"><option>색상</option></select><span class="combo-btn"><svg class="tri"><use href="#tri"/></svg></span></div>
              <button class="more" aria-label="세부 정보"><svg class="n18"><use href="#details"/></svg></button>
            </div>
            <div class="list colors">
              <div class="swatches">
                <button class="c1" aria-label="색상 A01"></button><button class="c2" aria-label="색상 A02"></button><button class="c3" aria-label="색상 A03"></button>
                <button class="c4" aria-label="색상 A04"></button><button class="c5" aria-label="색상 A05"></button><button class="c6" aria-label="색상 A06"></button>
                <button class="c7" aria-label="색상 A07"></button><button class="c8" aria-label="색상 A08"></button><button class="c9" aria-label="색상 B01"></button>
                <button class="c10" aria-label="색상 B02"></button><button class="c11" aria-label="색상 B03"></button><button class="c12" aria-label="색상 B04"></button>
                <button class="c13" aria-label="색상 B05"></button><button class="c14" aria-label="색상 B06"></button><button class="c15" aria-label="색상 B07"></button>
                <button class="c16" aria-label="색상 B08"></button><button class="c17" aria-label="색상 C01"></button><button class="c18" aria-label="색상 C02"></button>
              </div>
              <div class="scrollbar"><svg><use href="#up"/></svg><span class="thumb"></span><svg class="end"><use href="#down"/></svg></div>
            </div>
          </section>

          <section class="second">
            <h4>선택</h4>
            <div class="navrow">
              <button aria-label="뒤로"><svg class="n16"><use href="#navleft"/></svg></button><button aria-label="앞으로"><svg class="n16"><use href="#navright"/></svg></button><button aria-label="모델에서"><svg class="n20"><use href="#home"/></svg></button>
              <div class="combo underlined"><select aria-label="보조 컬렉션"><option>재질</option></select><span class="combo-btn"><svg class="tri"><use href="#tri"/></svg></span></div>
              <button class="more" aria-label="세부 정보"><svg class="n18"><use href="#details"/></svg></button>
            </div>
            <div class="list folders">
              <div class="swatches">
                <button aria-label="폴더 1"><svg><use href="#folder"/></svg></button><button aria-label="폴더 2"><svg><use href="#folder"/></svg></button><button aria-label="폴더 3"><svg><use href="#folder"/></svg></button>
              </div>
              <div class="scrollbar"><svg><use href="#up"/></svg><span class="thumb"></span></div>
            </div>
          </section>
        </div>
        <div class="scrollbar outer"><svg><use href="#up"/></svg><span class="thumb"></span><svg class="end"><use href="#down"/></svg></div>
      </div>
    </aside>
    <div class="caption-band"></div>
  </div>

  <!-- Status -->
  <footer class="status">
    <svg class="st" viewBox="0 0 18 18"><circle cx="9" cy="9" r="8" fill="#f4f4f4" stroke="#999"/><path d="M9 15Q5 9 5.500 6q3.500-5 7 0Q13 9 9 15z" fill="#999"/></svg>
    <svg class="st" viewBox="0 0 18 18"><circle cx="9" cy="9" r="8" fill="#fff" stroke="#111" stroke-width="1.500"/><circle cx="9" cy="5" r="1.500"/><path d="M6 7h6v2h-1.500v5h-3V9H6z"/></svg>
    <svg class="st" viewBox="0 0 18 18"><circle cx="9" cy="9" r="8" fill="#eee" stroke="#999"/><circle cx="9" cy="6" r="3.500" fill="#999"/><path d="M3 13q1-3 6-3t6 3q-6 7-12 0z" fill="#999"/></svg>
    <span class="hint">시작점 선택</span>
    <div class="measure"><label for="length">길이</label><input type="text" id="length" value="686mm"></div>
  </footer>
</body>
</html>
```
FILE: styles.css
```css
* {
  box-sizing: border-box;
}
body {
  margin: 0;
  height: 100vh;
  padding: 44px 0;
  display: flex;
  flex-direction: column;
  overflow: hidden;
  background: #fff;
  color: #111;
  font-family: "Noto Sans CJK KR", sans-serif;
  font-size: 15px;
}
button {
  margin: 0;
  padding: 0;
  border: none;
  background: none;
  font: inherit;
  color: inherit;
  display: flex;
  align-items: center;
  justify-content: center;
}
h2, h3, h4 {
  margin: 0;
  font-weight: 400;
}
svg {
  display: block;
  flex: none;
}
.sprite {
  display: none;
}
.icon {
  width: 32px;
  height: 32px;
}
.tri {
  width: 10px;
  height: 6px;
}
.glyph {
  font: 12px "Liberation Mono", monospace;
  fill: #222;
}
.tiny {
  font: 7px "Liberation Sans", sans-serif;
}
.wire { fill: none; }
.half { fill: #d3d3d3; fill-opacity: 0.6; }
.filled { fill: #bcbcbc; }

/* menu */
.menubar {
  flex: none;
  height: 19px;
  padding-left: 7px;
  display: flex;
  align-items: flex-start;
  gap: 16px;
}
.menubar a {
  color: #222;
  text-decoration: none;
  line-height: 17px;
}

/* toolbar */
.toolbar {
  flex: none;
  height: 50px;
  padding-top: 1px;
  display: flex;
  background: #f3f3f3;
  border-top: 1px solid #e6e6e6;
  border-bottom: 2px solid #a9aaa8;
}
.group {
  display: flex;
  align-items: center;
  border-right: 1px solid #a0a0a0;
}
.group.last {
  flex: 1;
}
.grip {
  flex: none;
  width: 10px;
  height: 40px;
  background: radial-gradient(circle, #aaa 1px, transparent 1px) 0 0 / 10px 4px;
}
.tool {
  flex: none;
  width: 42px;
  height: 42px;
}
.sep {
  width: 8px;
  height: 38px;
  border-left: 1px solid #8c8c8c;
  margin-left: 2px;
  margin-right: -2px;
}
.split {
  width: 64px;
  height: 42px;
  display: flex;
  align-items: center;
}
.split .tool {
  width: 45px;
}
.drop {
  width: 16px;
  height: 16px;
}
.split.active, .tool.active {
  background: #c9e0f5;
  border: 1px solid #92c0e8;
}
.active .drop {
  background: #f0f5fa;
}
.slider {
  width: 146px;
  margin-left: 6px;
  padding-top: 3px;
}
.slider + .slider {
  margin-left: 15px;
}
.slider input {
  appearance: none;
  display: block;
  width: 100%;
  height: 9px;
  margin: 0;
  border-top: 2px solid #777;
  border-left: 2px solid #777;
  border-bottom: 1px solid #fff;
}
.slider input::-webkit-slider-thumb {
  appearance: none;
  width: 4px;
  height: 13px;
  background: #f4f4f4;
  border-right: 1px solid #555;
}
.date {
  background: linear-gradient(90deg, #fff, #f3d28b 18%, #edb72e 35%, #e95c22 54%, #e3161a 68%, #f08f91 85%, #fff);
}
.time {
  background: linear-gradient(90deg, #fff, #9bb9df 35%, #6173e8 65%, #39408b 82%, #000);
}
.ticks {
  display: flex;
  justify-content: space-between;
  padding-top: 2px;
  font: 10px/12px "Liberation Sans", "Noto Sans CJK KR", sans-serif;
}
.months {
  padding: 2px 3px 0;
  font-weight: bold;
}

/* workspace */
.workspace {
  position: relative;
  flex: 1;
  min-height: 0;
  display: flex;
  background: #f1f1f1;
}
.caption-band {
  position: absolute;
  left: 0;
  right: 610px;
  bottom: 0;
  height: 72px;
  background: rgba(0, 0, 0, 0.42);
}
.sidebar {
  flex: none;
  width: 88px;
  border-right: 1px solid #b5b5b5;
}
.toolset {
  display: grid;
  grid-template-columns: 42px 42px;
  padding: 1px 0 0 2px;
  border-bottom: 1px solid #aaa;
}
.grip-h {
  grid-column: 1 / 3;
  height: 8px;
  background: radial-gradient(circle, #aaa 1px, transparent 1px) 0 0 / 4px 8px;
}
.toolset hr {
  grid-column: 1 / 3;
  width: 80px;
  height: 8px;
  margin: 0 2px;
  border: none;
  background: linear-gradient(#8c8c8c, #8c8c8c) 0 2px / 100% 1px no-repeat;
}
.viewport {
  position: relative;
  flex: 1;
  min-width: 0;
  border-top: 1px solid #666;
  border-left: 2px solid #666;
  border-bottom: 2px solid #e4e4e4;
}
.scene {
  width: 100%;
  height: 100%;
}
.keys {
  position: absolute;
  right: 14px;
  bottom: 6px;
  width: 280px;
  display: flex;
  flex-direction: column;
  align-items: flex-start;
  gap: 26px;
}
.keys kbd {
  height: 46px;
  padding: 0 7px;
  border-radius: 4px;
  background: #8b8b8b;
  box-shadow: 0 0 4px 2px rgba(139, 139, 139, 0.4);
  color: #fff;
  font: bold 28px/43px "DejaVu Sans", sans-serif;
}

/* tray */
.tray {
  flex: none;
  width: 302px;
  padding-left: 6px;
  display: flex;
  flex-direction: column;
}
.tray-title {
  flex: none;
  height: 26px;
  padding: 0 4px 0 4px;
  display: flex;
  align-items: center;
  background: linear-gradient(#c3cfde, #d6e2f0);
}
.tray-title h2 {
  flex: 1;
  padding-bottom: 2px;
  font-size: 15px;
  line-height: 22px;
}
.pin svg {
  width: 10px;
  height: 12px;
}
.close-red {
  width: 12px;
  height: 12px;
  margin-left: 8px;
  background: #c65355;
}
.close-red svg {
  width: 10px;
}
.tray-body {
  flex: 1;
  min-height: 0;
  display: flex;
}
.panels {
  flex: 1;
  min-width: 0;
  display: flex;
  flex-direction: column;
  overflow: hidden;
  padding-top: 1px;
}
.bar {
  height: 23px;
  padding: 0 4px 0 9px;
  display: flex;
  align-items: center;
  border-top: 1px solid #b0b0b0;
  border-left: 1px solid #b0b0b0;
  background: linear-gradient(#e6e6e6, #b3b3b3);
}
.bar .tri {
  height: 9px;
}
.bar h3 {
  flex: 1;
  margin-left: 7px;
  padding-bottom: 3px;
  font-size: 16px;
  line-height: 18px;
}
.close {
  width: 15px;
  height: 15px;
  background: #e8e8e8;
  border: 1px solid #888;
}
.close svg {
  width: 7px;
}
.entity {
  flex: none;
  height: 204px;
}
.entity-row {
  height: 32px;
  margin-left: 2px;
  padding: 0 8px 2px 9px;
  display: flex;
  align-items: center;
  justify-content: space-between;
  background: linear-gradient(#999, #999) 0 100% / 245px 1px no-repeat;
}
.entity-row strong {
  font-size: 12px;
}
.toggle svg {
  width: 12px;
  height: 18px;
}
.materials {
  flex: 1;
  min-height: 0;
  display: flex;
  flex-direction: column;
}
.materials > * {
  flex: none;
}
.current {
  height: 92px;
  padding: 2px 1px 0 2px;
  display: flex;
  align-items: flex-start;
  border-bottom: 1px solid #999;
}
.preview {
  width: 77px;
  height: 87px;
  padding: 5px 0;
  border: 1px solid #999;
}
.preview svg {
  width: 75px;
}
.name {
  flex: 1;
  min-width: 0;
  height: 23px;
  margin-left: 3px;
  padding: 0 3px 3px;
  border: 1px solid #fff;
  border-top: 2px solid #777;
  border-left: 2px solid #777;
  background: #f1f1f1;
  color: #888;
  font: 12px "Noto Sans CJK KR", sans-serif;
}
.current-tools {
  width: 32px;
  padding: 3px 0 0 4px;
  display: flex;
  flex-direction: column;
  align-items: center;
  gap: 10px;
}
.current-tools .create svg {
  width: 22px;
}
.current-tools .default svg {
  width: 26px;
}
.current-tools .default {
  margin-top: -5px;
}
.tabs {
  height: 31px;
  padding: 8px 4px 0 0;
  display: flex;
  font-size: 12px;
}
.tabs button {
  width: 46px;
  height: 22px;
  border-top: 1px solid #fff;
  border-right: 2px solid #777;
  padding-right: 14px;
}
.tabs button.on {
  width: 51px;
}
.tabs .dropper {
  margin-left: auto;
  width: 22px;
  padding: 0;
  border: none;
  margin-top: -2px;
}
.dropper svg {
  width: 22px;
}
.navrow {
  height: 36px;
  padding: 0 5px 0 8px;
  display: flex;
  align-items: center;
  gap: 11px;
  border-bottom: 1px solid #999;
}
.n16 {
  width: 16px;
  height: 16px;
}
.n18 {
  width: 18px;
  height: 18px;
}
.n20 {
  width: 20px;
  height: 20px;
}
.combo {
  position: relative;
  flex: 1;
  height: 27px;
  margin: 0 -4px 0 -5px;
  border: 1px solid #ddd;
  border-top: 2px solid #777;
  border-left: 2px solid #777;
  background: #fff;
}
.combo select {
  appearance: none;
  width: 100%;
  height: 100%;
  padding: 0 3px;
  border: none;
  background: none;
  color: #111;
  font: 12px "Noto Sans CJK KR", sans-serif;
}
.underlined::after {
  content: "";
  position: absolute;
  left: 3px;
  right: 25px;
  bottom: 1px;
  height: 1px;
  background: #000;
}
.combo-btn {
  position: absolute;
  top: 0;
  right: 0;
  bottom: 0;
  width: 21px;
  display: flex;
  align-items: center;
  justify-content: center;
  pointer-events: none;
  background: #f1f1f1;
  border-right: 2px solid #777;
  border-bottom: 2px solid #777;
}
.list {
  display: flex;
  min-height: 0;
  overflow: hidden;
  background: #fff;
}
.materials .colors {
  flex: 1;
}
.swatches {
  flex: 1;
  display: grid;
  grid-template-columns: repeat(3, 62px);
  grid-auto-rows: 62px;
  gap: 2px;
  padding: 2px 0 0 3px;
}
.swatches button {
  border: 1px solid #999;
  padding: 1px;
  background-clip: content-box;
}
.c1 { background-color: #fbcdcd; }
.c2 { background-color: #fa9b9b; }
.c3 { background-color: #f66866; }
.c4 { background-color: #f33638; }
.c5 { background-color: #ee0505; }
.c6 { background-color: #cb0003; }
.c7 { background-color: #990003; }
.c8 { background-color: #660003; }
.c9 { background-color: #fcdacc; }
.c10 { background-color: #f9b29a; }
.c11 { background-color: #f98f67; }
.c12 { background-color: #f66b35; }
.c13 { background-color: #f14307; }
.c14 { background-color: #cd360b; }
.c15 { background-color: #992a07; }
.c16 { background-color: #661a03; }
.c17 { background-color: #fee6cd; }
.c18 { background-color: #fccc9a; }
.scrollbar {
  flex: none;
  width: 20px;
  padding: 6px 0;
  display: flex;
  flex-direction: column;
  align-items: center;
  background: #f1f1f1;
}
.scrollbar svg {
  width: 10px;
  height: 10px;
}
.scrollbar .thumb {
  flex: none;
  width: 19px;
  height: 21px;
  margin-top: 5px;
  background: #cdcdcd;
}
.scrollbar .end {
  margin-top: auto;
}
.outer {
  width: 21px;
  border-left: 1px solid #fff;
  padding-top: 8px;
  padding-bottom: 4px;
}
.second {
  flex: none;
  height: 101px;
  padding-top: 3px;
}
.second h4 {
  height: 28px;
  padding: 0 0 0 5px;
  border-top: 2px solid #777;
  border-bottom: 1px solid #999;
  background: linear-gradient(#f4f4f4 3px, #999 3px, #999 4px, #e4e4e4 4px);
  font-size: 12px;
  line-height: 28px;
}
.folders {
  height: 34px;
}
.folders .swatches button {
  align-items: flex-end;
  padding-bottom: 6px;
}
.folders svg {
  width: 40px;
  height: 40px;
}
.folders .scrollbar svg {
  width: 10px;
  height: 10px;
}

/* status */
.status {
  flex: none;
  height: 27px;
  padding: 7px 5px 0 7px;
  display: flex;
  align-items: center;
  gap: 17px;
  background: #f1f1f1;
  overflow: hidden;
}
.st {
  width: 18px;
  height: 18px;
}
.hint {
  flex: 1;
  margin-left: -5px;
  padding-left: 11px;
  border-left: 1px solid #888;
  font-size: 17px;
  line-height: 15px;
}
.measure {
  width: 302px;
  display: flex;
  align-items: center;
  font-size: 16px;
}
.measure label {
  flex: none;
  width: 52px;
  padding-left: 11px;
  border-left: 1px solid #888;
  line-height: 15px;
}
.measure input {
  flex: 1;
  min-width: 0;
  height: 30px;
  padding: 0 2px;
  border: 1px solid #a9b3c3;
  background: #fff;
  font: 16px "Noto Sans CJK KR", sans-serif;
}
```
